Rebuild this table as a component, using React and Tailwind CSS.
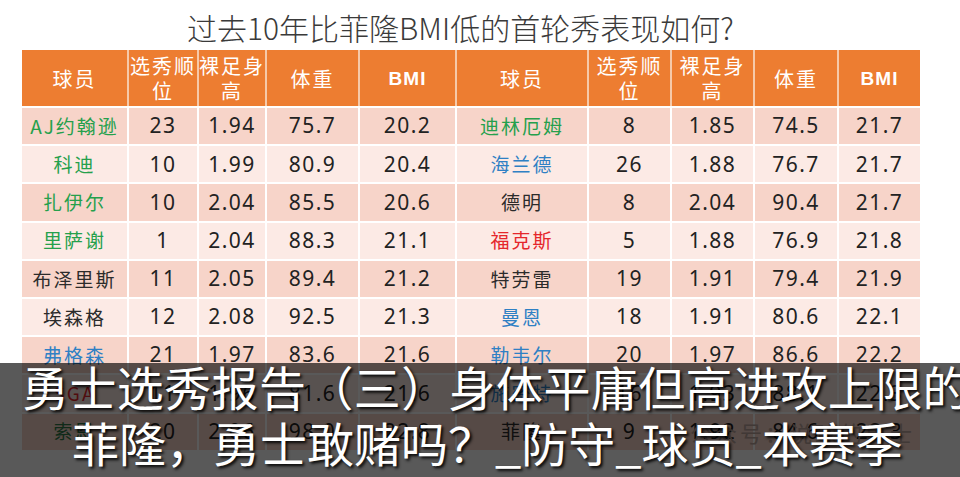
import React from "react";

const G = "text-[#25a04c]";
const B = "text-[#2f80c4]";
const R = "text-[#e5262b]";
const D = "text-[#2b2b2b]";
const DG = "text-[#2f7a48]";

const widths = ["w-[105px]", "w-[70px]", "w-[68px]", "w-[93px]", "w-[97px]", "w-[132px]", "w-[83px]", "w-[83px]", "w-[84px]", "w-[83px]"];

const rows = [
  [["AJ约翰逊", G], "23", "1.94", "75.7", "20.2", ["迪林厄姆", G], "8", "1.85", "74.5", "21.7"],
  [["科迪", G], "10", "1.99", "80.9", "20.4", ["海兰德", B], "26", "1.88", "76.7", "21.7"],
  [["扎伊尔", G], "10", "2.04", "85.5", "20.6", ["德明", D], "8", "2.04", "90.4", "21.7"],
  [["里萨谢", G], "1", "2.04", "88.3", "21.1", ["福克斯", R], "5", "1.88", "76.9", "21.8"],
  [["布泽里斯", D], "11", "2.05", "89.4", "21.2", ["特劳雷", D], "19", "1.91", "79.4", "21.9"],
  [["埃森格", D], "12", "2.08", "92.5", "21.3", ["曼恩", B], "18", "1.91", "80.6", "22.1"],
  [["弗格森", B], "21", "1.97", "83.6", "21.6", ["勒韦尔", B], "20", "1.97", "86.6", "22.2"],
  [["SGA", R], "11", "1.96", "81.6", "21.6", ["施密特", B], "16", "1.93", "88.1", "22.3"],
  [["索恩", DG], "20", "2.06", "98.0", "22.8", ["菲隆", D], "9", "1.92", "84.6", "22.3"],
];

const headers = [["球员"], ["选秀顺", "位"], ["裸足身", "高"], ["体重"], ["BMI"], ["球员"], ["选秀顺", "位"], ["裸足身", "高"], ["体重"], ["BMI"]];

export default function App() {
  return (
    <div className="relative w-[960px] h-[477px] overflow-hidden bg-white font-['Noto_Sans_CJK_SC',sans-serif]">
      <div className="h-[50px] pt-[4px] pl-[187px] flex items-center text-[30px] text-[#3a3a3a] font-light whitespace-nowrap">
        过去10年比菲隆BMI低的首轮秀表现如何?
      </div>

      <div className="ml-[22px] w-[898px]">
        <div className="flex h-[56px] bg-[#ed7d31] text-white">
          {headers.map((h, i) => (
            <div
              key={i}
              className={`${widths[i]} ${i > 0 ? "border-l-2 border-[#f6c9a9]" : ""} flex flex-col items-center justify-center leading-[25px]`}
            >
              {h[0] === "BMI" ? (
                <span className="font-['Liberation_Sans',sans-serif] font-bold text-[19px] tracking-[1px]">BMI</span>
              ) : (
                h.map((t, j) => (
                  <span key={j} className="text-[20px] tracking-[2px]">{t}</span>
                ))
              )}
            </div>
          ))}
        </div>

        {rows.map((r, ri) => (
          <div
            key={ri}
            className={`flex h-[38.2px] border-t-2 border-white ${ri % 2 === 0 ? "bg-[#f7d4c9]" : "bg-[#fceae5]"}`}
          >
            {r.map((cell, ci) => (
              <div
                key={ci}
                className={`${widths[ci]} ${ci > 0 ? "border-l-2 border-white" : ""} flex items-center justify-center`}
              >
                {Array.isArray(cell) ? (
                  <span className={`${cell[1]} text-[19px] tracking-[2px]`}>{cell[0]}</span>
                ) : (
                  <span className="text-[#222] text-[21px] tracking-[1.5px] font-['Noto_Sans',sans-serif]">{cell}</span>
                )}
              </div>
            ))}
          </div>
        ))}
      </div>

      <div className="absolute left-[690px] top-[416px] text-[22px] text-[#b9a39a] tracking-[3px] whitespace-nowrap">
        公众号：说球的勇士
      </div>

      <div className="absolute left-0 top-[363px] w-[960px] h-[114px] bg-black/65">
        <div className="-mt-[5px] flex flex-col text-white text-[47px] leading-[56px] whitespace-nowrap [text-shadow:2px_2px_3px_rgba(0,0,0,0.95)]">
          <div className="pl-[22px] tracking-[0.4px]">勇士选秀报告（三）身体平庸但高进攻上限的</div>
          <div className="pl-[72px]">菲隆，勇士敢赌吗？_防守_球员_本赛季</div>
        </div>
      </div>
    </div>
  );
}
